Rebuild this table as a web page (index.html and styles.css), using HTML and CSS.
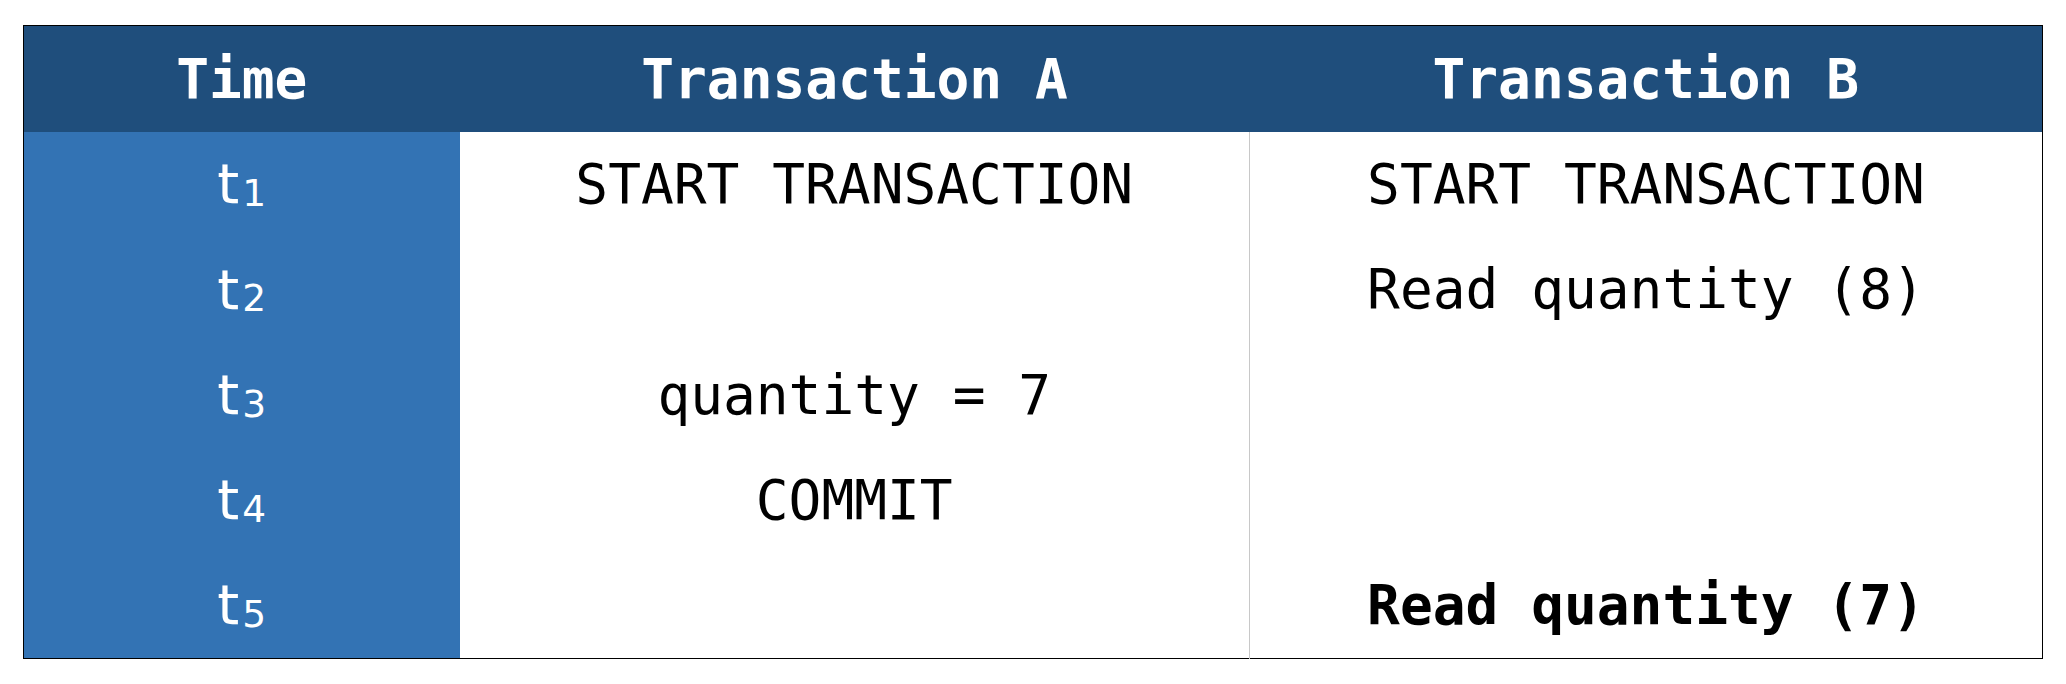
FILE: index.html
```html
<!DOCTYPE html>
<html>
<head>
<meta charset="utf-8">
<link rel="stylesheet" href="styles.css">
</head>
<body>
<div class="wrap">
<table class="tx">
  <colgroup>
    <col class="c-time">
    <col class="c-a">
    <col class="c-b">
  </colgroup>
  <thead>
    <tr><th>Time</th><th>Transaction A</th><th>Transaction B</th></tr>
  </thead>
  <tbody>
    <tr><td class="t">t<sub>1</sub></td><td class="a">START TRANSACTION</td><td class="b">START TRANSACTION</td></tr>
    <tr><td class="t">t<sub>2</sub></td><td class="a"></td><td class="b">Read quantity (8)</td></tr>
    <tr><td class="t">t<sub>3</sub></td><td class="a">quantity = 7</td><td class="b"></td></tr>
    <tr><td class="t">t<sub>4</sub></td><td class="a">COMMIT</td><td class="b"></td></tr>
    <tr><td class="t">t<sub>5</sub></td><td class="a"></td><td class="b strong">Read quantity (7)</td></tr>
  </tbody>
</table>
</div>
</body>
</html>
```
FILE: styles.css
```css
html, body {
  margin: 0;
  padding: 0;
  background: #ffffff;
}
.wrap {
  padding: 25px 24px 0 23px;
}
.tx {
  width: 2019px;
  border-collapse: collapse;
  table-layout: fixed;
  border: 1px solid #000;
  font-family: "DejaVu Sans Mono", monospace;
  font-size: 54.5px;
}
.c-time { width: 436px; }
.c-a { width: 790px; }
.c-b { width: 793px; }
.tx thead tr {
  height: 106px;
}
.tx th {
  background: #1f4e7c;
  color: #ffffff;
  font-weight: bold;
  text-align: center;
  padding: 0;
  line-height: 1;
}
.tx tbody tr {
  height: 105.4px;
}
.tx td {
  padding: 0;
  text-align: center;
  line-height: 1;
  color: #000;
  background: #fff;
}
.tx td.t {
  background: #3373b4;
  color: #fff;
  font-family: "DejaVu Sans", sans-serif;
  font-size: 56px;
}
.tx td.t sub {
  font-size: 0.67em;
  vertical-align: -0.07em;
  margin-left: 3px;
}
.tx td.a {
  border-right: 1px solid #c8c8c8;
}
.tx td.strong {
  font-weight: bold;
}
```
